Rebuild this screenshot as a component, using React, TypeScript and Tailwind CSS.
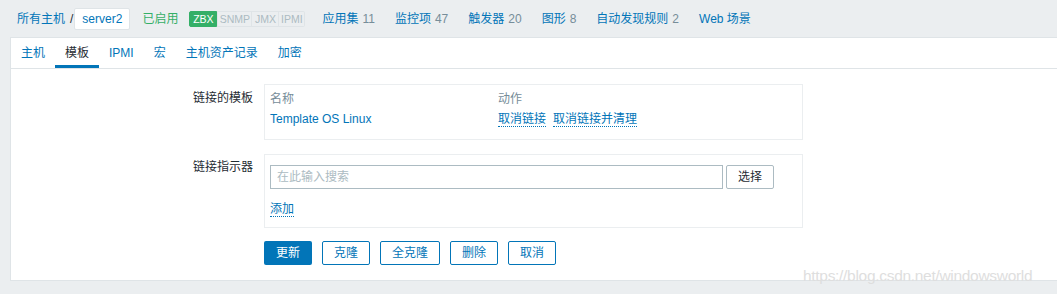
import React from 'react';

const navItems = [
  { label: '应用集', count: '11' },
  { label: '监控项', count: '47' },
  { label: '触发器', count: '20' },
  { label: '图形', count: '8' },
  { label: '自动发现规则', count: '2' },
  { label: 'Web 场景', count: '' },
];

const tabs = ['主机', '模板', 'IPMI', '宏', '主机资产记录', '加密'];

const App: React.FC = () => {
  return (
    <div
      className="relative w-[1057px] h-[294px] bg-[#ebeef0] text-[12px] text-[#1f2c33] overflow-hidden"
      style={{ fontFamily: '"Liberation Sans", Arial, "Noto Sans CJK SC", sans-serif' }}>
      {/* header */}
      <div className="flex items-center h-[37px] pl-[17px]">
        <span className="text-[#0275b8]">所有主机</span>
        <span className="ml-[5px] mr-[1px] text-[#1f2c33]">/</span>
        <span className="h-[22px] px-[7px] flex items-center bg-white border border-[#dfe4e7] rounded-[2px] text-[#0275b8]">
          server2
        </span>
        <span className="ml-[12px] text-[#34af67]">已启用</span>
        <div className="ml-[11px] flex h-[16px] text-[10.5px] leading-[14px]">
          <span className="w-[28px] text-center bg-[#34af67] text-white border border-[#34af67] rounded-l-[2px]">ZBX</span>
          <span className="w-[35px] text-center bg-[#ebeef0] text-[#acbbc2] border border-[#dfe4e7]">SNMP</span>
          <span className="w-[27px] text-center bg-[#ebeef0] text-[#acbbc2] border border-l-0 border-[#dfe4e7]">JMX</span>
          <span className="w-[26px] text-center bg-[#ebeef0] text-[#acbbc2] border border-l-0 border-[#dfe4e7] rounded-r-[2px]">IPMI</span>
        </div>
        <div className="ml-[17px] flex gap-[20px]">
          {navItems.map(item => (
            <span key={item.label}>
              <span className="text-[#0275b8]">{item.label}</span>
              {item.count && <span className="ml-[4px] text-[#768d99]">{item.count}</span>}
            </span>
          ))}
        </div>
      </div>

      {/* panel */}
      <div className="ml-[10px] h-[244px] bg-white border border-r-0 border-[#dfe4e7]">
        <div className="flex h-[31px] border-b border-[#dfe4e7]">
          {tabs.map((tab, i) => (
            <div
              key={tab}
              className={
                i === 1
                  ? 'px-[10px] flex items-center text-[#1f2c33] border-b-[3px] border-[#0275b8] pt-[3px]'
                  : 'px-[10px] flex items-center text-[#0275b8]'
              }>
              {tab}
            </div>
          ))}
        </div>

        <div className="pt-[15px]">
          {/* linked templates */}
          <div className="flex">
            <div className="w-[242px] text-right pt-[5px]">链接的模板</div>
            <div className="ml-[11px] w-[539px] h-[56px] border border-[#ebeef0] px-[5px] pt-[5px]">
              <div className="flex text-[#768d99] h-[18px] items-center">
                <span className="w-[228px]">名称</span>
                <span>动作</span>
              </div>
              <div className="flex h-[22px] items-center">
                <span className="w-[228px] text-[#0275b8]">Template OS Linux</span>
                <span className="text-[#0275b8] border-b border-dotted border-[#0275b8] leading-[14px]">取消链接</span>
                <span className="ml-[7px] text-[#0275b8] border-b border-dotted border-[#0275b8] leading-[14px]">
                  取消链接并清理
                </span>
              </div>
            </div>
          </div>

          {/* link indicator */}
          <div className="flex mt-[14px]">
            <div className="w-[242px] text-right pt-[4px]">链接指示器</div>
            <div className="ml-[11px] w-[539px] h-[74px] border border-[#ebeef0] px-[5px] pt-[10px]">
              <div className="flex gap-[3px]">
                <div className="w-[453px] h-[24px] border border-[#acbbc2] px-[6px] flex items-center text-[#acbbc2]">
                  在此输入搜索
                </div>
                <div className="w-[48px] h-[24px] border border-[#acbbc2] rounded-[2px] flex items-center justify-center">
                  选择
                </div>
              </div>
              <div className="mt-[11px]">
                <span className="text-[#0275b8] border-b border-dotted border-[#0275b8] leading-[14px]">添加</span>
              </div>
            </div>
          </div>

          {/* buttons */}
          <div className="flex ml-[253px] mt-[13px]">
            <div className="w-[48px] h-[24px] bg-[#0275b8] text-white rounded-[2px] flex items-center justify-center">
              更新
            </div>
            <div className="ml-[10px] w-[48px] h-[24px] border border-[#0275b8] text-[#0275b8] rounded-[2px] flex items-center justify-center">
              克隆
            </div>
            <div className="ml-[10px] w-[60px] h-[24px] border border-[#0275b8] text-[#0275b8] rounded-[2px] flex items-center justify-center">
              全克隆
            </div>
            <div className="ml-[10px] w-[48px] h-[24px] border border-[#0275b8] text-[#0275b8] rounded-[2px] flex items-center justify-center">
              删除
            </div>
            <div className="ml-[10px] w-[48px] h-[24px] border border-[#0275b8] text-[#0275b8] rounded-[2px] flex items-center justify-center">
              取消
            </div>
          </div>
        </div>
      </div>

      {/* watermark */}
      <div className="absolute left-[803px] top-[266px] text-[15.5px] leading-[20px] text-[#dedede] tracking-[-0.3px] whitespace-nowrap">
        https://blog.csdn.net/windowsworld
      </div>
    </div>
  );
};

export default App;
